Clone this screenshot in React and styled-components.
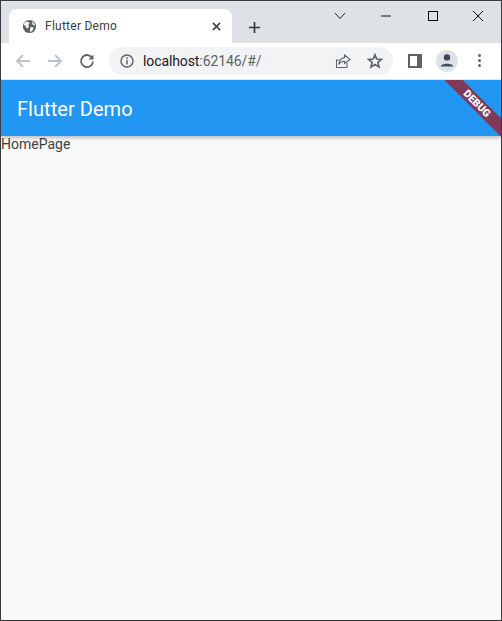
import React from "react";
import styled, { createGlobalStyle } from "styled-components";

const Global = createGlobalStyle`
  html, body { margin: 0; padding: 0; height: 100%; background: #fafafa; }
  #root { height: 100%; }
  * { box-sizing: border-box; }
`;

export default function App() {
  return (
    <Window>
      <Global />
      <TabStrip>
        <Tab>
          <Globe viewBox="0 0 16 16">
            <circle cx="8" cy="8" r="7" fill="#5f6368" />
            <path d="M3 3.5 L6.5 3 L8 4.5 L6.5 6.5 L7.5 8 L6 10 L4.8 9.5 L3.5 7 L1.8 6.5 Z M9.5 8.5 L12.5 9 L11 12.5 L9 14 L8.5 11 Z M10.5 2.5 L13 4.5 L14 7 L11.5 6 Z" fill="#fff" />
          </Globe>
          <TabTitle>Flutter Demo</TabTitle>
          <TabClose viewBox="0 0 10 10">
            <path d="M1 1 L9 9 M9 1 L1 9" />
          </TabClose>
        </Tab>
        <NewTab viewBox="0 0 14 14">
          <path d="M7 1 V13 M1 7 H13" />
        </NewTab>
        <WindowControls>
          <ControlSlot>
            <svg width="14" height="8" viewBox="0 0 14 8"><path d="M2 1 L7 6.5 L12 1" fill="none" stroke="#222" /></svg>
          </ControlSlot>
          <ControlSlot>
            <svg width="12" height="2" viewBox="0 0 12 2"><path d="M1 1 H11" stroke="#111" /></svg>
          </ControlSlot>
          <ControlSlot>
            <svg width="11" height="11" viewBox="0 0 11 11"><rect x="1.5" y="1.5" width="9" height="9" fill="none" stroke="#111" /></svg>
          </ControlSlot>
          <ControlSlot>
            <svg width="12" height="12" viewBox="0 0 12 12"><path d="M1 1 L11 11 M11 1 L1 11" stroke="#111" /></svg>
          </ControlSlot>
        </WindowControls>
      </TabStrip>
      <Toolbar>
        <NavIcon viewBox="0 0 16 16" $color="#bdc1c6">
          <path d="M15 8 H2 M8 2 L2 8 L8 14" />
        </NavIcon>
        <NavIcon viewBox="0 0 16 16" $color="#bdc1c6">
          <path d="M1 8 H14 M8 2 L14 8 L8 14" />
        </NavIcon>
        <NavIcon viewBox="0 0 16 16" $color="#5f6368">
          <path d="M13.2 5 A6 6 0 1 0 14 8.5" />
          <path d="M14.5 1.5 V6.5 H9.5 Z" fill="#5f6368" stroke="none" />
        </NavIcon>
        <Omnibox>
          <InfoIcon viewBox="0 0 14 14">
            <circle cx="7" cy="7" r="6" fill="none" stroke="#5f6368" strokeWidth="1.4" />
            <path d="M7 6 V10.5 M7 3.4 V5" stroke="#5f6368" strokeWidth="1.5" />
          </InfoIcon>
          <Url>localhost<UrlRest>:62146/#/</UrlRest></Url>
          <ShareIcon viewBox="0 0 16 16">
            <path d="M12 9.5 V14.5 H1.5 V7 H4" />
            <path d="M9.5 2 L15 6.5 L9.5 10.5 V8.3 C7 8.3 5 9.5 3.8 11.5 C4 8 6 5 9.5 4.6 Z" />
          </ShareIcon>
          <StarIcon viewBox="0 0 16 16">
            <path d="M8 1.8 L9.8 6 L14.4 6.4 L10.9 9.4 L12 13.9 L8 11.5 L4 13.9 L5.1 9.4 L1.6 6.4 L6.2 6 Z" />
          </StarIcon>
        </Omnibox>
        <SidePanel />
        <Avatar>
          <svg width="14" height="13" viewBox="0 0 14 13">
            <circle cx="7" cy="3.4" r="3.2" fill="#3f4a5e" />
            <path d="M0.8 12.5 C0.8 8.8 13.2 8.8 13.2 12.5 Z" fill="#3f4a5e" />
          </svg>
        </Avatar>
        <Kebab>
          <Dot />
          <Dot />
          <Dot />
        </Kebab>
      </Toolbar>
      <Page>
        <AppBar>
          <AppTitle>Flutter Demo</AppTitle>
        </AppBar>
        <Body>HomePage</Body>
        <Ribbon>DEBUG</Ribbon>
      </Page>
    </Window>
  );
}

const Window = styled.div`
  width: 502px;
  height: 621px;
  display: flex;
  flex-direction: column;
  border: 1px solid #3a3d40;
  border-bottom-color: #333;
  overflow: hidden;
  background: #fafafa;
`;
const TabStrip = styled.div`
  height: 42px;
  flex: none;
  display: flex;
  align-items: flex-end;
  padding-left: 8px;
  background: #dee1e6;
`;
const Tab = styled.div`
  width: 223px;
  height: 34px;
  display: flex;
  align-items: center;
  padding: 0 11px 0 13px;
  background: #fff;
  border-radius: 8px 8px 0 0;
`;
const Globe = styled.svg`
  width: 15px;
  height: 15px;
  flex: none;
`;
const TabTitle = styled.span`
  flex: 1;
  margin-left: 8px;
  font: 12px "Roboto", "Liberation Sans", sans-serif;
  letter-spacing: 0.25px;
  color: #3c4043;
`;
const TabClose = styled.svg`
  width: 9px;
  height: 9px;
  fill: none;
  stroke: #3c4043;
  stroke-width: 1.7;
`;
const NewTab = styled.svg`
  width: 13px;
  height: 13px;
  margin: 0 0 9px 16px;
  fill: none;
  stroke: #33363a;
  stroke-width: 1.8;
`;
const WindowControls = styled.div`
  display: flex;
  margin-left: auto;
  align-self: flex-start;
  height: 29px;
`;
const ControlSlot = styled.div`
  width: 46px;
  height: 29px;
  display: flex;
  align-items: center;
  justify-content: center;
`;
const Toolbar = styled.div`
  height: 37px;
  flex: none;
  display: flex;
  align-items: center;
  padding: 0 0 1px 14px;
  background: #fff;
  border-bottom: 1px solid #e3e4e6;
`;
const NavIcon = styled.svg`
  width: 16px;
  height: 16px;
  flex: none;
  margin-right: 16px;
  fill: none;
  stroke: ${(p) => p.$color};
  stroke-width: 1.8;
`;
const Omnibox = styled.div`
  width: 284px;
  height: 28px;
  margin-left: -2px;
  display: flex;
  align-items: center;
  padding: 0 10px 0 11px;
  background: #f1f3f4;
  border-radius: 14px;
`;
const InfoIcon = styled.svg`
  width: 14px;
  height: 14px;
  flex: none;
`;
const Url = styled.span`
  flex: 1;
  margin-left: 9px;
  font: 14px "Roboto", "Liberation Sans", sans-serif;
  letter-spacing: -0.1px;
  color: #202124;
`;
const UrlRest = styled.span`
  color: #5f6368;
`;
const ShareIcon = styled.svg`
  width: 16px;
  height: 16px;
  margin-right: 16px;
  fill: none;
  stroke: #5f6368;
  stroke-width: 1.1;
`;
const StarIcon = styled.svg`
  width: 16px;
  height: 16px;
  fill: none;
  stroke: #5f6368;
  stroke-width: 1.7;
`;
const SidePanel = styled.div`
  width: 14px;
  height: 14px;
  margin-left: 15px;
  flex: none;
  background: #fff;
  border: solid #5f6368;
  border-width: 2px 5px 2px 2px;
`;
const Avatar = styled.div`
  width: 22px;
  height: 22px;
  margin-left: 14px;
  flex: none;
  display: flex;
  align-items: center;
  justify-content: center;
  background: #dee1e6;
  border-radius: 50%;
`;
const Kebab = styled.div`
  display: flex;
  flex-direction: column;
  gap: 2px;
  margin-left: 20px;
`;
const Dot = styled.span`
  width: 3px;
  height: 3px;
  background: #5f6368;
  border-radius: 50%;
`;
const Page = styled.div`
  position: relative;
  flex: 1;
  overflow: hidden;
  background: #fafafa;
`;
const AppBar = styled.header`
  height: 56px;
  display: flex;
  align-items: center;
  padding: 1px 0 0 16px;
  background: #2196f3;
  box-shadow: 0 2px 4px rgba(0, 0, 0, 0.25);
`;
const AppTitle = styled.h1`
  margin: 0;
  font: 400 20px "Roboto", "Liberation Sans", sans-serif;
  letter-spacing: 0.05px;
  color: #fff;
`;
const Body = styled.div`
  font: 14px/16px "Roboto", "Liberation Sans", sans-serif;
  color: #404040;
`;
const Ribbon = styled.div`
  position: absolute;
  top: 17px;
  left: 426px;
  width: 100px;
  height: 13px;
  transform: rotate(45deg);
  background: #7f3a5a;
  color: #fff;
  font: 900 10.5px/13px "Roboto", "Liberation Sans", sans-serif;
  text-align: center;
`;
